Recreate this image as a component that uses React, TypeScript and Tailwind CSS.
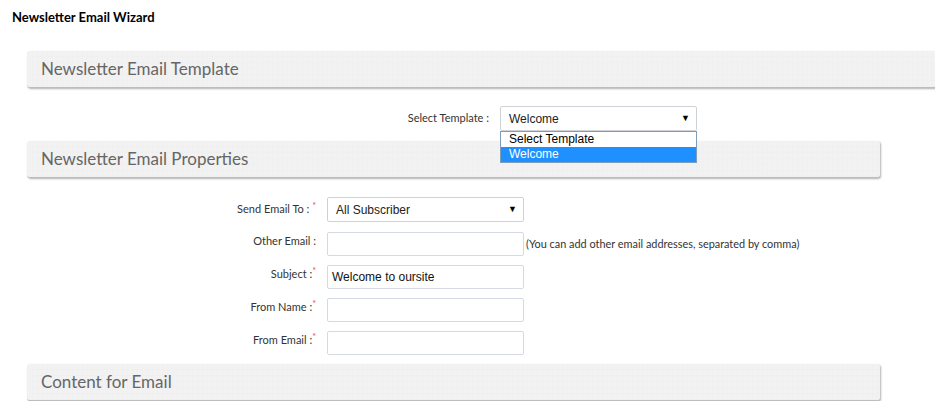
import React from 'react';

const panelBg =
	'bg-[#f2f2f2] bg-[repeating-linear-gradient(90deg,rgba(0,0,0,0.009)_0px,rgba(0,0,0,0.009)_1px,transparent_1px,transparent_5px),repeating-linear-gradient(0deg,rgba(0,0,0,0.009)_0px,rgba(0,0,0,0.009)_1px,transparent_1px,transparent_6px)]';

function Panel({ title, wide }: { title: string; wide?: boolean }) {
	return (
		<div
			className={`${panelBg} ${
				wide ? 'w-[930px]' : 'w-[853px]'
			} h-[37px] rounded-[3px] border-b border-[#bdbdbd] shadow-[1px_1px_2px_rgba(0,0,0,0.3)] flex items-center pl-[14px]`}
		>
			<span className="text-[17px] text-[#666666]">{title}</span>
		</div>
	);
}

function Req() {
	return <span className="text-[#e05050] text-[9px] align-top relative top-[-2px]">*</span>;
}

function FakeSelect({ value, h }: { value: string; h: string }) {
	return (
		<div
			className={`w-[197px] ${h} border border-[#cfd3d8] rounded-[2px] bg-white flex items-center justify-between pl-[8px] pr-[6px] font-['Liberation_Sans',Arial,sans-serif] text-[12px] text-[#222]`}
		>
			<span>{value}</span>
			<span className="text-[9px] text-black">▼</span>
		</div>
	);
}

function Field({ label, req, value, hint }: { label: string; req?: boolean; value?: string; hint?: string }) {
	return (
		<div className="flex items-center h-[24px]">
			<div className="w-[291px] text-right text-[11px] text-[#333] pr-[2px] relative top-[-3px]">
				{label}
				{req && <Req />}
			</div>
			<div className="ml-[9px] w-[197px] h-[24px] border border-[#d5dae2] rounded-[2px] bg-white flex items-center pl-[4px] font-['Liberation_Sans',Arial,sans-serif] text-[12px] text-[#111]">
				{value}
			</div>
			{hint && <span className="ml-[2px] text-[10.9px] text-[#333]">{hint}</span>}
		</div>
	);
}

export default function App() {
	return (
		<div className="w-[935px] h-[401px] overflow-hidden bg-white font-['Lato','Noto_Sans',sans-serif]">
			<div className="pl-[12px] pt-[9px] leading-[16px] text-[13px] font-bold text-black">
				Newsletter Email Wizard
			</div>
			<div className="pl-[27px] pt-[26px]">
				<Panel title="Newsletter Email Template" wide />

				<div className="flex items-center mt-[18px] h-[25px]">
					<div className="w-[462px] text-right text-[11px] text-[#333]">Select Template :</div>
					<div className="ml-[11px] relative">
						<FakeSelect value="Welcome" h="h-[25px]" />
						<div className="absolute left-0 top-[25px] w-[197px] border border-[#7f9db9] bg-white z-10 font-['Liberation_Sans',Arial,sans-serif] text-[12px] leading-[15px]">
							<div className="pl-[8px] text-black">Select Template</div>
							<div className="pl-[8px] bg-[#1e90ff] text-white">Welcome</div>
						</div>
					</div>
				</div>

				<div className="mt-[10px]">
					<Panel title="Newsletter Email Properties" />
				</div>

				<div className="mt-[19px] flex items-center h-[25px]">
					<div className="w-[291px] text-right text-[11px] text-[#333] pr-[2px]">
						Send Email To : <Req />
					</div>
					<div className="ml-[9px]">
						<FakeSelect value="All Subscriber" h="h-[25px]" />
					</div>
				</div>

				<div className="mt-[10px] flex flex-col gap-[9px]">
					<Field label="Other Email :" hint="(You can add other email addresses, separated by comma)" />
					<Field label="Subject :" req value="Welcome to oursite" />
					<Field label="From Name :" req />
					<Field label="From Email :" req />
				</div>

				<div className="mt-[9px]">
					<Panel title="Content for Email" />
				</div>
			</div>
		</div>
	);
}
